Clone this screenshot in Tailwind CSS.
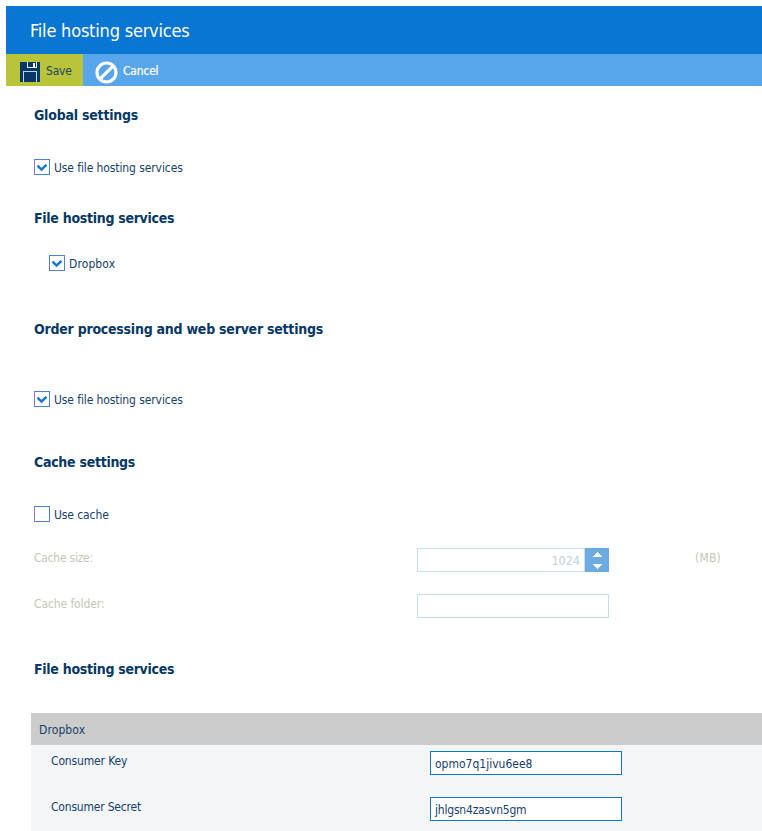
<!DOCTYPE html>
<html lang="en">
<head>
<meta charset="utf-8">
<title>File hosting services</title>
<script src="https://cdn.jsdelivr.net/npm/@tailwindcss/browser@4"></script>
</head>
<body class="h-[831px] overflow-hidden bg-white pt-[6px] pl-[6px] font-['DejaVu_Sans_Condensed','DejaVu_Sans',sans-serif] [font-stretch:condensed] text-[12px] leading-4 text-[#17406a]">
<header class="flex h-12 items-center bg-[#0a76d3] pl-6 text-[18px] leading-6 tracking-[-0.2px] text-white"><h1 class="relative top-px">File hosting services</h1></header>
<nav class="flex h-8 bg-[#57a5eb]">
  <button class="flex w-[77px] items-center gap-[6px] bg-[#b8c43a] pl-[14px] text-[#24445a]">
    <svg class="mt-1 h-5 w-5 shrink-0" viewBox="0 0 20 20" shape-rendering="crispEdges"><path fill="#063865" d="M0 0h19l1 1v19H0z"/><path fill="#e5edf2" d="M7 0h1v5h8V0h1v6H7z"/><path fill="#fff" d="M13 1h2v4h-2z"/><path fill="#c4d3df" d="M3 9h14v11h-1V10H4v10H3z"/></svg>
    <span class="relative top-px tracking-[-0.2px]">Save</span>
  </button>
  <button class="flex items-center gap-[5px] pl-3 text-white">
    <svg class="mt-[4px] h-[23px] w-[23px]" viewBox="0 0 23 23" fill="none" stroke="#fff" stroke-width="3.2"><circle cx="11.5" cy="11.5" r="9.5"/><path d="M4.8 18.2 18.2 4.8"/></svg>
    <span class="relative top-px tracking-[-0.2px] [-webkit-text-stroke:0.2px_#fff]">Cancel</span>
  </button>
</nav>
<main>
  <div class="pl-7">
    <h2 class="mt-5 h-[53px] text-[14px] leading-[18px] font-bold tracking-[-0.22px] text-[#063865]">Global settings</h2>
    <label class="flex h-4 items-center gap-1"><span class="h-4 w-4 border border-[#4d80d8] border-l-[#8679d0] bg-white"><svg viewBox="0 0 14 14" fill="none" stroke="#1675d3" stroke-width="2.4"><path d="m2.5 5.7 4 3.8 5-4.6"/></svg></span><span class="relative top-px tracking-[-0.1px]">Use file hosting services</span></label>
    <h2 class="mt-[34px] h-[46px] text-[14px] leading-[18px] font-bold tracking-[-0.29px] text-[#063865]">File hosting services</h2>
    <label class="ml-[15px] flex h-4 items-center gap-1"><span class="h-4 w-4 border border-[#4d80d8] bg-white"><svg viewBox="0 0 14 14" fill="none" stroke="#1675d3" stroke-width="2.4"><path d="m2.5 5.7 4 3.8 5-4.6"/></svg></span><span class="relative top-px tracking-[0.1px]">Dropbox</span></label>
    <h2 class="mt-[49px] h-[71px] text-[14px] leading-[18px] font-bold tracking-[-0.24px] text-[#063865]">Order processing and web server settings</h2>
    <label class="flex h-4 items-center gap-1"><span class="h-4 w-4 border border-[#4d80d8] border-l-[#8679d0] bg-white"><svg viewBox="0 0 14 14" fill="none" stroke="#1675d3" stroke-width="2.4"><path d="m2.5 5.7 4 3.8 5-4.6"/></svg></span><span class="relative top-px tracking-[-0.1px]">Use file hosting services</span></label>
    <h2 class="mt-[46px] h-[53px] text-[14px] leading-[18px] font-bold tracking-[-0.28px] text-[#063865]">Cache settings</h2>
    <label class="flex h-4 items-center gap-1"><span class="h-4 w-4 border border-[#4d80d8] border-l-[#8679d0] bg-white"></span><span class="relative top-px tracking-[-0.1px]">Use cache</span></label>
    <div class="mt-[26px] flex h-[46px] items-start text-[#c5c5b5]">
      <span class="w-[383px] pt-[2px] tracking-[-0.25px]">Cache size:</span>
      <div class="flex h-6 w-48"><div class="flex-1 border border-[#c3dff3] pt-1 pr-1 text-right text-[12.5px] leading-4 text-[#c2d0dd]">1024</div><div class="w-6 bg-[#6dabe3]"><svg viewBox="0 0 24 24" fill="#fff" shape-rendering="crispEdges"><path d="M8 9h9v-1h-1V7h-1V6h-1V5h-1V4h-1v1h-1v1h-1v1H9v1H8zM8 16h9v1h-1v1h-1v1h-1v1h-1v1h-1v-1h-1v-1h-1v-1H9v-1H8z"/></svg></div></div>
      <span class="ml-[86px] pt-[2px] tracking-[0.2px]">(MB)</span>
    </div>
    <div class="flex h-[66px] items-start text-[#c5c5b5]">
      <span class="w-[383px] pt-[2px] tracking-[-0.1px]">Cache folder:</span>
      <div class="h-6 w-48 border border-[#c3dff3]"></div>
    </div>
    <h2 class="h-[53px] text-[14px] leading-[18px] font-bold tracking-[-0.29px] text-[#063865]">File hosting services</h2>
  </div>
  <section class="ml-[25px] h-[118px] bg-[#f3f5f7]">
    <div class="h-8 bg-[#ccc] pt-[9px] pl-2 tracking-[0.1px]">Dropbox</div>
    <div class="mt-[6px] flex h-[46px] items-start pl-5"><span class="w-[379px] pt-[2px] tracking-[-0.15px]">Consumer Key</span><div class="h-6 w-48 border border-[#1175cd] bg-white pt-1 pl-1">opmo7q1jivu6ee8</div></div>
    <div class="flex items-start pl-5"><span class="w-[379px] pt-[2px] tracking-[-0.2px]">Consumer Secret</span><div class="h-6 w-48 border border-[#1175cd] bg-white pt-1 pl-1 tracking-[-0.2px]">jhlgsn4zasvn5gm</div></div>
  </section>
</main>
</body>
</html>
